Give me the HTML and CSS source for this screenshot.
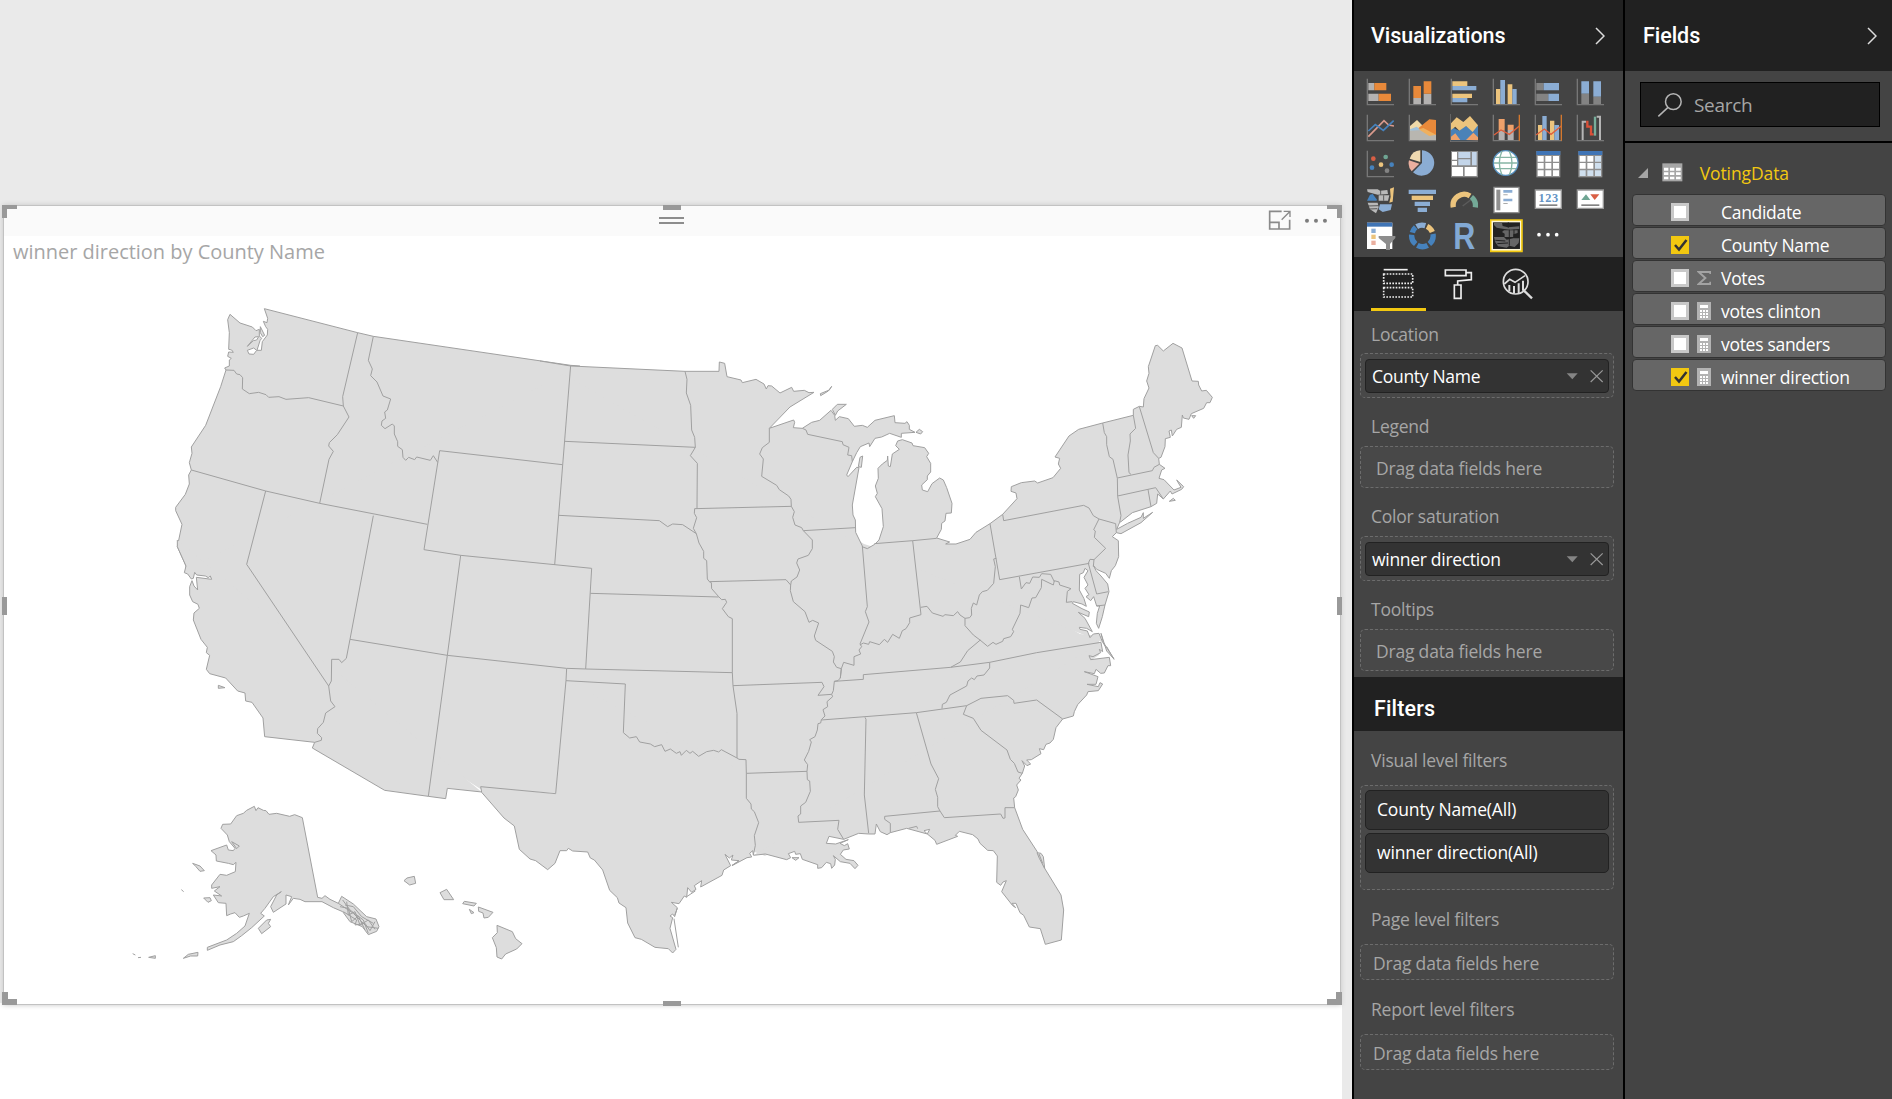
FILE: index.html
```
<!DOCTYPE html>
<html lang="en">
<head>
<meta charset="utf-8">
<title>Report</title>
<link rel="stylesheet" href="styles.css">
</head>
<body>
<div class="app">
  <main class="canvas">
    <section class="visual">
      <i class="h tl"></i><i class="h tc"></i><i class="h tr"></i><i class="h ml"></i><i class="h mr"></i><i class="h bl"></i><i class="h bc"></i><i class="h br"></i>
      <header class="visual-bar">
        <span class="grip"></span>
        <svg class="bar-icons" viewBox="140 55 190 72"><g fill="none" stroke="#8a8a8a" stroke-width="5"><path d="M187 65H151V118H211V90M151 98H179V118"/><path d="M187 90 211 66M193 65H212V82" stroke-width="4"/></g><g fill="#7d7d7d"><circle cx="263" cy="93" r="6"/><circle cx="290" cy="93" r="6"/><circle cx="317" cy="93" r="6"/></g></svg>
      </header>
      <h1 class="visual-title"><span>winner direction by County Name</span></h1>
      <svg class="map" viewBox="5 270 1334 730">
        <path class="land" d="M186 566 375 455 572 366 700 440 864 544 880 549 980 575 1080 634 1099 636 1099 655 940 760 765 856 752 851 744 776 650 745 566 690 556 793 482 790 320 685 177 545z"/>
        <!-- coasts and outer frontiers -->
        <g class="shape">
          <path transform="translate(120 290) scale(.33333)" d="M1380 228 1352 226 760 139 713 128 433 56 443 85 441 98 430 94 437 110 443 118 442 135 427 155 424 181 411 181 420 152 425 145 418 138 418 118 408 122 397 111 360 99 330 73 323 89 328 128 326 178 335 180 340 187 326 186 323 199 334 205 328 210 328 228 314 234 318 240 302 290 257 406 214 471 216 490 208 518 214 540 206 555 208 582 196 613 167 652 167 662 186 703 172 770 198 828 198 840"/>
          <path transform="translate(120 540) scale(.33333)" d="M172 0V20L198 78 193 98 203 102 214 117 220 115 224 97 230 105 256 108 265 113 271 108 275 118 229 112 233 150 222 138 216 122 209 140 209 165 218 185 234 193 238 205 222 219 220 240 243 298 262 322 259 338 269 346 259 388 269 401 317 414 353 453 375 459 377 483 396 487 429 534 434 590 584 607 577 624 794 751 925 769 977 776 982 745 1085 756"/>
          <path transform="translate(540 340) scale(.33333)" d="M0 63 92 78 435 94 537 94 538 66 554 70 561 110 603 120 607 128 648 118 672 132 679 147 684 137 695 138 720 159 755 142 761 154 793 151 807 158 822 157 750 201 688 265 761 240 764 247 760 263 787 265 815 247 839 241 873 211 884 226 886 241 898 230 925 236 943 259 967 256 982 262 1005 241 1063 227 1065 248 1095 250 1101 245 1108 256 1108 268 1125 277 1084 280 1084 292 1049 280 1025 291 1005 295 989 320 987 309 961 320 950 338 937 365 920 405 924 410 950 382 957 383 937 495 939 525 946 540 947 577 967 618"/>
          <path transform="translate(760 330) scale(.33333)" d="M306 650 322 656 344 643 357 630 370 590 366 536 346 500 352 490 346 468 355 445 354 415 367 402 382 391 383 378 385 408 391 410 397 372 418 358 407 347 413 333 427 329 456 339 459 347 494 353 506 370 500 380 512 400 512 426 502 438 502 449 485 465 487 480 503 485 516 461 539 444 550 450 560 473 576 520 574 549 558 550 555 573 545 580 544 598 530 624 569 636 557 642 588 642 630 628 648 607 690 581 728 553 771 506 768 489 753 484 754 470 784 458 824 453 833 459 879 443 902 415 895 402 899 385 885 381 927 318 956 298 1028 279 1120 256 1120 238 1138 229 1150 231 1152 206 1167 174 1160 153 1167 130 1165 110 1186 47 1193 46 1210 63 1239 40 1266 54 1296 153 1315 154 1316 165 1325 183 1339 181 1357 202 1350 218 1340 218 1331 235 1294 251 1287 268 1270 264 1267 255 1264 292 1250 298 1237 318 1234 300 1227 303 1231 322 1216 326 1215 350 1203 382 1196 385 1198 403 1215 415 1205 420 1197 445 1212 449 1242 480 1263 472 1250 450 1271 470 1265 478 1236 492 1231 483 1210 507 1193 492 1190 520 1173 530 1117 548 1083 575 1079 577 1070 598 1103 580 1143 562 1150 548 1150 565 1178 547 1143 578 1083 611 1069 608 1057 620 1075 632 1076 680 1066 707 1054 722 1048 745 1037 730 1010 718 1000 706 1008 722 1023 738 1043 762 1047 785 1035 825 1027 860 1016 895 1009 880 1012 850 1019 828 1010 828 1001 800 992 812 978 800 987 794 975 775 984 765 972 742 984 722 975 715 970 728 959 733 958 780 972 806 979 829 966 822 940 815 937 820 966 836 988 846 986 860 955 847 975 865 997 905 980 895 958 892 960 898 982 903 990 923 1000 912 1017 910 1028 937"/>
          <path transform="translate(720 560) scale(.33333)" d="M1143 247 1148 275 1138 268 1142 278 1119 290 1107 287 1112 299 1168 292 1172 317 1164 317 1153 339 1142 340 1128 328 1123 341 1093 335 1134 350 1128 373 1101 373 1135 380 1140 368 1148 372 1135 392 1104 395 1100 405 1073 434 1063 455 1060 468 1028 477 1008 503 1000 538 990 549 978 553 971 569 958 566 963 581 934 599 920 600 932 612 921 617 906 602 914 618 907 640 897 655 903 660 890 675 895 690 887 710 881 714 884 743 908 808 951 874 974 925 1023 1005 1031 1050 1024 1140 976 1153 961 1106 928 1101 911 1066 900 1058 888 1030 876 1030 887 1043 878 1037 845 995 859 962 849 966 842 976 830 967 832 888 820 872 803 871 780 850 774 837 758 824 718 814 706 826 713 829 650 853 645 841 622 822 560 805 511 818 501 824 481 815 469 792 465 822 446 822 416 820 371 838 327 829 319 850 347 852 385 839 360 850 373 857 383 851 388 867 370 870 361 883 378 898 402 902 414 916 405 926 390 910 361 905 340 887 346 898 344 915 335 925 332 911 319 907 305 923 293 925 293 914 247 898 241 881 227 883 224 874 205 881 212 893 200 899 136 882 100 886"/>
          <path transform="translate(540 640) scale(.33333)" d="M619 400V475L633 492 634 507 643 515 656 548 643 587 646 616 640 645 638 632 629 640 635 651 621 653 576 677 597 662 574 660 579 645 568 654 555 643 572 677 551 690 546 706 482 741 485 722 463 737 468 748 455 757 443 743 440 772 433 768 417 791 394 787 412 803 404 830 398 822 390 828 398 833 390 865 408 928 398 939 385 926 345 922 304 898 285 893 263 849 258 803 237 789 232 773 209 751 188 690 163 660 151 654 143 636 98 633 85 625 80 632 60 632 45 670 23 689 -13 662 -30 657 -62 628 -77 558 -108 534 -175 457 -178 440 47 461 78 122"/>
        </g>
        <!-- inlets -->
        <g class="shape water">
          <path transform="translate(120 290) scale(.33333)" d="M382 181 401 174 410 181 401 193 387 192zM382 169 405 141 416 140 410 150 400 152z"/>
          <path transform="translate(720 560) scale(.33333)" d="M612 812 629 808 622 822z"/>
        </g>
        <!-- islands and spits -->
        <g class="shape">
          <path transform="translate(120 290) scale(.33333)" d="M421 110 434 136 428 140 421 128z"/>
          <path transform="translate(540 340) scale(.33333)" d="M841 161 868 150 875 139 865 153 842 167zM877 208 892 193 919 193 893 213 886 226zM1128 277 1138 268 1148 275 1142 282zM955 380 960 352 968 348 964 382z"/>
          <path transform="translate(760 330) scale(.33333)" d="M1295 257H1307L1301 265zM1228 514 1240 505 1246 511zM1028 937 1062 988 1040 950"/>
          <path transform="translate(720 560) scale(.33333)" d="M951 878 963 880 970 890 974 925 958 895zM957 882 968 910M216 893H237L227 901zM566 805 590 799 593 806M36 916 56 904M1143 220 1150 247 1182 297 1160 273z"/>
          <path transform="translate(540 640) scale(.33333)" d="M402 836 415 922M440 770 466 753M404 826 412 805"/>
          <path transform="translate(120 540) scale(.33333)" d="M295 436 315 443 295 445zM403 799 408 812 414 803 430 811 438 812 447 823 470 820 509 829 524 824 547 833 593 1072 606 1075 615 1067 630 1078 655 1090 665 1069 700 1092 740 1130 768 1137 777 1160 770 1174 745 1184 727 1160 690 1145 668 1115 640 1103 606 1085 555 1085 540 1078 520 1075 505 1095 515 1070 498 1065V1092L460 1117 452 1100 470 1065 484 1055 460 1070 435 1105 422 1120 433 1128 395 1163 365 1187 340 1205 300 1215 262 1231 262 1222 320 1200 350 1180 375 1158 388 1120 370 1128 358 1132 345 1118 332 1122 320 1127 318 1090 295 1088 280 1065 305 1068 283 1053 300 1040 275 1045 275 1035 300 1003 320 1006 346 995 348 967 340 974 325 970 289 963 288 945 273 932 320 915 325 930 340 932 345 925 328 905 322 885 303 865 308 853 332 852 350 827 370 820 380 811z"/>
          <path transform="translate(120 540) scale(.33333)" d="M218 970 240 978 253 992 240 994 228 980zM184 1049 191 1055M251 1074 270 1073 274 1082 264 1087zM415 1165 440 1140 452 1138 445 1150 452 1160 425 1181zM335 905 358 918 350 926zM190 1255 205 1243 234 1237 233 1248 212 1248zM86 1252 106 1247V1255zM54 1253 63 1252M38 1241 46 1245"/>
          <path transform="translate(120 540) scale(.33333)" fill="none" d="M655 1090 700 1120 740 1160 775 1165M668 1080 690 1110 730 1140 745 1180M660 1100 685 1105 695 1145 715 1128 735 1170M675 1095 700 1100 725 1130 760 1150M670 1115 710 1140 705 1155 735 1150 750 1172 765 1145M680 1085 685 1125 705 1115 720 1155 745 1140 765 1168"/>
          <path transform="translate(120 540) scale(.33333)" d="M852 1022 861 1014 883 1009 887 1030 869 1035zM960 1058 980 1048 1001 1079H972zM1033 1084 1069 1090 1062 1098 1028 1091zM1075 1101 1119 1117 1105 1132 1092 1134 1089 1119 1076 1114zM1048 1108 1062 1118 1054 1121zM1131 1156 1177 1175 1187 1196 1206 1211 1190 1227 1157 1242 1145 1257 1131 1251 1129 1223 1117 1193 1132 1178z"/>
        </g>
        <!-- state lines -->
        <g class="shape lines">
          <path transform="translate(120 290) scale(.33333)" d="M318 240 342 241 350 252 360 254 368 263 367 297 388 311 416 307 438 314 446 322 477 320 498 328 566 323 670 348M713 128 668 320 670 348 687 381 652 434 628 458 626 468 640 484 627 508 599 640M214 540 437 603 599 640 922 703M760 139 745 211 757 237 752 257 771 276 789 318 812 327 802 360 794 366 797 385 786 393 784 406 795 416 817 402 823 408 823 432 833 455 833 469 847 479 849 502 857 511 866 502 884 509 890 501 931 511 940 497 953 517M1327 524 959 482 912 779 1022 796 1415 835M1352 226 1304 825M437 603 380 823M760 677 690 1048"/>
          <path transform="translate(120 540) scale(.33333)" d="M380 73 626 438 632 483 645 500 617 519 610 547 593 566 592 580 605 593 604 601 584 607M690 298 679 355 665 368 657 358 635 358 634 423 626 438M690 298 982 346 1339 385M1022 46 982 346 925 769"/>
          <path transform="translate(540 340) scale(.33333)" d="M787 265 798 270 803 283 907 305 909 314 927 322 923 345 935 347 937 365M688 265V307L667 323 659 342 670 357 665 409 710 436 718 449 746 468 753 478 754 499 763 515 758 532 765 555 785 563 790 572 817 600 817 626 805 646 774 657 770 669 779 690 771 711 754 723 752 735M464 506 754 499M508 725 738 719 752 735 751 752 760 785 795 815 807 847 818 841 836 849 823 888 827 901 877 934 883 950 880 966 890 982 904 986M790 572 946 563M967 618 982 800 976 815 987 846 960 912M1118 602 1143 824 1109 834 1109 848 1098 866 1087 872 1078 895 1058 883 1043 907 1033 898 1018 914 989 905 986 913 970 909 960 915M1003 611 1118 602 1190 595M960 912 965 920 957 930 962 942 942 950 942 976 911 967 904 986 901 1014M435 94 441 118 439 159 452 196 455 270 464 292 466 322 451 347 472 370 471 506M75 304 466 322M57 526 358 542 383 560 398 552 428 554 469 581M464 506 463 520 470 533 460 565 469 581 477 609 491 634 491 655 500 662 502 717 508 725 514 728 515 746 536 770 545 779 556 778 560 787 547 806 565 830 577 836 577 998M151 760 536 771M155 685 137 987M80 985 137 987 577 998"/>
          <path transform="translate(540 640) scale(.33333)" d="M80 85 78 122 256 132 250 278 269 294 289 290 299 306 331 312 344 320 365 314 375 334 391 327 409 340 420 335 424 346 439 331 450 340 458 334 476 349 500 335 521 331 536 336 544 329 591 354 597 358 618 359 619 400M577 98 579 137 591 220 591 354M579 137 846 127 852 140 834 166 875 163M619 400 801 394M904 86 901 114 894 122 883 124 880 152 875 163 878 170 861 185 863 200 849 209 855 228 844 239 842 249 834 251 832 270 825 290 809 299 814 306 806 334 793 360 803 374 801 394 802 419 809 423 811 454 797 487 782 498 782 522 774 528 776 547 897 541 893 568 911 598M975 232 978 238 973 465 986 580"/>
          <path transform="translate(720 560) scale(.33333)" d="M511 818V790L494 778V769L660 753 673 773 842 762 849 775 855 774 855 743 884 743M589 458 633 612 656 656 646 688 653 712 653 740 660 753M740 437 730 463 760 475 783 511 861 570 871 598 883 610 894 636 907 640M740 437 783 415 863 407 881 421 882 430 950 420 1028 477M809 307V324L792 345 771 348 763 359 755 354 744 363 740 378 690 405 679 427 667 433 666 446M304 480 435 470 589 458 740 437M343 364 430 358 430 344 692 322 809 307 950 278 1143 247M692 322 721 306 743 272 781 240"/>
          <path transform="translate(760 330) scale(.33333)" d="M482 832 501 829 517 849 549 859 555 854 580 857 593 845 600 855 615 865 615 887 640 915 660 930 683 949 699 937 708 943 728 934 731 926 752 920 761 905 757 898 780 850 782 825 806 833 816 804 827 803 844 773 845 748 880 765 883 752 897 756 899 765 933 776 922 784 919 817 937 815M615 865 629 863 635 855 634 835 640 819 650 825 658 795 667 785 682 781 701 760 706 710 701 687 709 685M690 581 719 749 988 700M778 740 784 777 798 758 809 760 818 741 838 742 845 731 872 733 883 755M985 700 1010 792 1045 785M985 700 990 688 1002 689 1000 710M1002 689 1037 655 1003 622 1006 603 1001 599 1017 567M728 553 731 572 971 526 987 534 1000 557 1017 567 1067 581 1069 608M1028 279 1033 308 1040 320 1040 344 1048 380 1059 388 1072 445 1073 499 1083 557 1079 577M1120 256 1127 295 1110 312 1111 333 1104 375 1107 428 1113 433M1072 444 1177 422 1182 412 1198 403M1073 498 1187 473 1210 507M1164 478 1173 530M1138 230 1180 368 1196 385M1010 828 1035 825"/>
        </g>
      </svg>
    </section>
  </main>

  <aside class="pane vis">
    <header class="pane-head"><h2><span>Visualizations</span></h2><svg class="chev" viewBox="0 0 10 18"><path d="M1 1 9 9 1 17"/></svg></header>
    <div class="gallery">
      <svg viewBox="50 234 84 84"><path class="ax" d="M54 236V314H134"/><path fill="#b4b2b1" d="M57 249H75V271H57zM57 281H88V303H57z"/><path fill="#e8893a" d="M75 249H111V271H75zM88 281H125V303H88z"/></svg>
      <svg viewBox="176 234 84 84"><path class="ax" d="M180 236V314H260"/><path fill="#b4b2b1" d="M192 294H215V312H192zM223 281H246V312H223z"/><path fill="#e8893a" d="M192 258H215V294H192zM223 244H246V281H223z"/></svg>
      <svg viewBox="302 234 84 84"><path class="ax" d="M306 236V314H386"/><path fill="#ecc47d" d="M309 244H354V258H309zM309 281H368V294H309z"/><path fill="#8badd4" d="M309 258H381V271H309zM309 294H354V307H309z"/></svg>
      <svg viewBox="428 234 84 84"><path class="ax" d="M432 236V314H512"/><path fill="#ecc47d" d="M440 267H453V312H440zM475 253H489V312H475z"/><path fill="#8badd4" d="M453 240H467V312H453zM489 267H502V312H489z"/></svg>
      <svg viewBox="554 234 84 84"><path class="ax" d="M558 236V314H638"/><path fill="#838383" d="M561 249H583V271H561zM561 281H597V303H561z"/><path fill="#8badd4" d="M583 249H629V271H583zM597 281H629V303H597z"/></svg>
      <svg viewBox="680 234 84 84"><path class="ax" d="M684 236V314H764"/><path fill="#8badd4" d="M696 244H719V281H696zM732 244H755V290H732z"/><path fill="#838383" d="M696 281H719V312H696zM732 290H755V312H732z"/></svg>

      <svg viewBox="50 342 84 84"><path class="ax" d="M54 344V422H134"/><path d="M57 410 104 362 118 375 134 378" fill="none" stroke="#d99a8c" stroke-width="5"/><path d="M57 393 78 374 102 391 133 362" fill="none" stroke="#4682bd" stroke-width="5"/></svg>
      <svg viewBox="176 342 84 84"><path class="ax" d="M180 344V422H260"/><path fill="#efd9a8" d="M182 378 203 360 218 375V420H182z"/><path fill="#e8893a" d="M203 388 240 358 260 360V408L230 400z"/><path fill="#9fc1dc" d="M182 388 202 380 222 395 182 392z"/><path fill="#b8b6b0" d="M182 392 220 390 260 405V420H182z"/><path fill="#efb05e" d="M208 388 222 384 260 404 240 408z"/></svg>
      <svg viewBox="302 342 84 84"><path fill="#4a82b8" d="M305 380 330 392 345 375 365 388 386 375V421H305z"/><path fill="#ecc47d" d="M305 370 322 352 342 366 362 348 386 376 370 396 350 378 330 392 318 380 305 390z"/><path fill="#efa26a" d="M305 410 318 400 333 420H305zM350 420 372 398 386 412V421z"/><path class="ax" d="M302 340V426H390" stroke="#8b8b8b"/></svg>
      <svg viewBox="428 342 84 84"><path class="ax" d="M432 344V422H512"/><path fill="#efa16a" d="M448 357H466V392H448zM475 374H493V390H475z"/><path fill="#b4b2b1" d="M448 392H466V420H448zM475 390H493V420H475z"/><path fill="none" stroke="#e0603c" stroke-width="4" d="M434 405 455 390 480 403 510 378"/><path fill="none" stroke="#d4782e" stroke-width="4" d="M510 344V422"/></svg>
      <svg viewBox="554 342 84 84"><path class="ax" d="M558 344V422H638"/><path fill="#ecc47d" d="M566 375H579V420H566zM602 362H615V420H602z"/><path fill="#8badd4" d="M579 348H592V420H579zM615 375H629V420H615z"/><path fill="none" stroke="#e0603c" stroke-width="4" d="M560 405 585 387 605 403 636 378"/><path fill="none" stroke="#d4782e" stroke-width="4" d="M636 344V422"/></svg>
      <svg viewBox="680 342 84 84"><path class="ax" d="M684 344V422H764"/><path fill="none" stroke="#b5b5b5" stroke-width="6" d="M700 420V365H710M742 350H752V420"/><path fill="none" stroke="#d95038" stroke-width="7" d="M714 362V380H725V403H733"/><path fill="none" stroke="#77ad9b" stroke-width="7" d="M737 407V350"/></svg>

      <svg viewBox="50 450 84 84"><path class="ax" d="M54 452V530H134"/><circle cx="72" cy="476" r="7" fill="#d95f45"/><circle cx="109" cy="471" r="7" fill="#6fa593"/><circle cx="95" cy="494" r="7" fill="#ecc47d"/><circle cx="127" cy="494" r="7" fill="#4682bd"/><circle cx="68" cy="503" r="7" fill="#4682bd"/><circle cx="113" cy="512" r="7" fill="#838383"/></svg>
      <svg viewBox="176 450 84 84"><path fill="#8badd4" d="M218 489V451A38 38 0 1 1 191 517z"/><path fill="#efd9b0" d="M213 486 181 476A36 36 0 0 1 213 451z"/><path fill="#eaaf9f" d="M210 491 187 514A36 36 0 0 1 179 481z"/></svg>
      <svg viewBox="302 450 84 84"><path fill="#8a8a8a" d="M305 453H386V532H305z"/><path fill="#fff" d="M308 456H323V479H308zM308 483H323V496H308zM308 501H341V528H308zM346 501H382V528H346z"/><path fill="#c3d5e9" d="M327 456H363V474H327zM368 456H382V496H368zM327 478H363V496H327z"/></svg>
      <svg viewBox="428 450 84 84"><circle cx="469" cy="489" r="37" fill="#fff" stroke="#5590c0" stroke-width="4"/><path fill="none" stroke="#86b5a5" stroke-width="4" d="M437 472H501M434 489H504M437 506H501M458 453Q442 489 458 525M480 453Q496 489 480 525"/></svg>
      <svg viewBox="554 450 84 84"><path fill="#8f8f8f" d="M561 453H633V532H561z"/><path fill="#3f74b5" d="M561 453H633V465H561z"/><path fill="#fff" d="M565 468H583V485H565zM588 468H606V485H588zM611 468H629V485H611zM565 489H583V506H565zM588 489H606V506H588zM611 489H629V506H611zM565 511H583V528H565zM588 511H606V528H588zM611 511H629V528H611z"/></svg>
      <svg viewBox="680 450 84 84"><path fill="#8f8f8f" d="M687 453H759V532H687z"/><path fill="#3f74b5" d="M687 453H759V465H687z"/><path fill="#fff" d="M691 468H709V485H691zM714 468H732V485H714zM691 489H709V506H691zM714 489H732V506H714z"/><path fill="#cfdfee" d="M737 468H755V485H737zM737 489H755V506H737zM691 511H709V528H691zM714 511H732V528H714zM737 511H755V528H737z"/></svg>

      <svg viewBox="50 558 84 84"><path fill="#b9b9b9" d="M53 568H85L92 572 114 570 116 582 85 584 55 576zM88 586H120L116 602H88zM55 608H85L88 622 80 640 62 628z"/><path fill="#4682bd" d="M62 584 70 582 82 598V602H53z"/><path fill="#ecc47d" d="M122 566 134 562 130 605 120 608 124 590z"/><path fill="#8badd4" d="M92 613H128L124 630 100 636 88 628z"/><path fill="none" stroke="#444" stroke-width="2.500" d="M53 618 88 617M60 627 84 626M94 570V584M103 586V602"/></svg>
      <svg viewBox="176 558 84 84"><path fill="#8badd4" d="M178 569H260V582H178zM196 605H242V618H196zM205 623H233V636H205z"/><path fill="#ecc47d" d="M187 587H251V600H187z"/></svg>
      <svg viewBox="302 558 84 84"><path fill="none" stroke="#ecc47d" stroke-width="16" d="M312 622A33 33 0 0 1 362 588"/><path fill="none" stroke="#74a997" stroke-width="16" d="M366 591A33 33 0 0 1 378 622"/><path stroke="#5c5c5c" stroke-width="4" d="M340 618 364 600"/></svg>
      <svg viewBox="428 558 84 84"><path fill="#fff" stroke="#8f8f8f" stroke-width="4" d="M434 562H509V638H434z"/><path fill="#8f8f8f" d="M441 569H453V631H441z"/><path fill="#8badd4" d="M462 570H489V578H462zM462 596H489V604H462z"/><path fill="#aaa" d="M462 583H475V586H462zM462 609H475V612H462z"/></svg>
      <svg viewBox="554 558 84 84"><path fill="#fff" stroke="#999" stroke-width="4" d="M558 570H636V625H558z"/><text x="598" y="605" text-anchor="middle" class="num" fill="#6393c4">123</text><path fill="#838383" d="M570 613H624V618H570z"/></svg>
      <svg viewBox="680 558 84 84"><path fill="#fff" stroke="#999" stroke-width="4" d="M684 570H762V625H684z"/><path fill="#6fa593" d="M696 600H723L710 583z"/><path fill="#d95f45" d="M723 583H750L736 600z"/><path fill="#838383" d="M696 613H750V618H696z"/></svg>

      <svg viewBox="50 666 90 84" class="wide"><path fill="#fff" d="M53 668H129V747H53z"/><path fill="#3f74b5" d="M53 668H129V680H53z"/><path fill="#8badd4" d="M66 686H79V699H66z"/><path fill="#ecc47d" d="M66 704H79V717H66z"/><path fill="#eaaf9f" d="M66 722H79V735H66z"/><path fill="#8d8d8d" d="M88 708H138V714L122 732V752H110V732L88 714z"/></svg>
      <svg viewBox="176 666 84 84"><g fill="none" stroke-width="16"><path stroke="#8badd4" d="M202 680A32 32 0 0 1 228 677"/><path stroke="#ecc47d" d="M233 679A32 32 0 0 1 249 696"/><path stroke="#4682bd" d="M251 702A32 32 0 0 1 240 732M235 736A32 32 0 0 1 204 736M199 732A32 32 0 0 1 187 704M189 698A32 32 0 0 1 199 682"/></g></svg>
      <svg class="r-icon" viewBox="302 648 84 126"><text x="312" y="748" class="r" fill="#82a9d4" textLength="66" lengthAdjust="spacingAndGlyphs">R</text></svg>
      <svg viewBox="420 658 100 100" class="picked"><path fill="#fff8d8" stroke="#f2c811" stroke-width="5" d="M422 661H516V755H422z"/><path fill="#222" d="M429 668H510V748H429z"/><path fill="#666" d="M432 669H456L458 679 474 683 508 680V688L480 690 462 688 440 684 432 676zM462 692H503V700L490 704V712H464V702L456 697zM432 712H462L470 720 490 716H508L506 730 494 742 478 738 470 744 444 740 436 728z"/><path stroke="#222" stroke-width="3" fill="none" d="M475 668V684M478 690V712M492 690V712M436 722 466 724M442 732 474 730M478 716V738"/></svg>
      <svg viewBox="554 666 84 84"><g fill="#fff"><circle cx="569" cy="704" r="5.5"/><circle cx="596" cy="704" r="5.5"/><circle cx="622" cy="704" r="5.5"/></g></svg>
    </div>
    <nav class="tabs">
      <svg class="on" viewBox="64 21 164 153"><path fill="none" stroke="#eee" stroke-width="5" d="M102 59H174"/><g fill="none" stroke="#eee" stroke-width="5" stroke-dasharray="5 4"><path d="M102 72H189V100H102zM102 113H189V141H102z"/></g></svg>
      <svg viewBox="245 21 164 153"><path fill="none" stroke="#eee" stroke-width="5" d="M288 60H350V77H288zM350 68H366V89L325 93V104M315 105H335V145H315z"/></svg>
      <svg viewBox="423 21 164 153"><g fill="none" stroke="#ddd" stroke-width="5"><circle cx="500" cy="95" r="37"/><path d="M524 121 549 145" stroke-width="7"/><path d="M466 102 482 88 498 97 528 77"/><path d="M481 105V124M495 108V130M509 100V130M522 92V122" stroke-width="6"/></g></svg>
    </nav>
    <div class="wells">
      <h3>Location</h3>
      <div class="well"><div class="chip"><span>County Name</span><svg viewBox="645 360 120 44"><path fill="#858585" d="M650 373H683L667 391z"/><path stroke="#999" stroke-width="3.5" d="M722 364 758 399M758 364 722 399"/></svg></div></div>
      <h3>Legend</h3>
      <div class="well hint">Drag data fields here</div>
      <h3>Color saturation</h3>
      <div class="well"><div class="chip"><span>winner direction</span><svg viewBox="645 360 120 44"><path fill="#858585" d="M650 373H683L667 391z"/><path stroke="#999" stroke-width="3.5" d="M722 364 758 399M758 364 722 399"/></svg></div></div>
      <h3>Tooltips</h3>
      <div class="well hint">Drag data fields here</div>
    </div>
    <header class="filters-head"><h2>Filters</h2></header>
    <div class="filters">
      <h3>Visual level filters</h3>
      <div class="well stack"><div class="card">County Name(All)</div><div class="card">winner direction(All)</div></div>
      <h3>Page level filters</h3>
      <div class="well hint">Drag data fields here</div>
      <h3>Report level filters</h3>
      <div class="well hint">Drag data fields here</div>
    </div>
  </aside>

  <aside class="pane fields">
    <header class="pane-head"><h2>Fields</h2><svg class="chev" viewBox="0 0 10 18"><path d="M1 1 9 9 1 17"/></svg></header>
    <div class="search-wrap"><div class="search"><svg viewBox="110 272 78 78"><g fill="none" stroke="#b5b5b5" stroke-width="4.5"><circle cx="159" cy="301" r="23.500"/><path d="M143 318 114 345"/></g></svg><span>Search</span></div></div>
    <div class="table-name"><svg class="tri" viewBox="0 0 10 10"><path fill="#a6a6a6" d="M10 0V10H0z"/></svg><svg class="tbl" viewBox="126 488 62 56"><path fill="#a6a6a6" d="M127 489H187V543H127z"/><path fill="#fff" d="M132 502H145V511H132zM150 502H163V511H150zM168 502H182V511H168zM132 516H145V524H132zM150 516H163V524H150zM168 516H182V524H168zM132 529H145V537H132zM150 529H163V537H150zM168 529H182V537H168z"/></svg><span>VotingData</span></div>
    <ul>
      <li><i class="cb"></i><b></b>Candidate</li>
      <li><i class="cb ck"><svg viewBox="0 0 18 18"><path d="M4 9 8 13.500 15.500 4"/></svg></i><b></b>County Name</li>
      <li><i class="cb"></i><b><svg viewBox="232 814 42 42"><path fill="none" stroke="#a3a3a3" stroke-width="6" d="M272 823V817H237L257 835 237 853H272V846"/></svg></b>Votes</li>
      <li><i class="cb"></i><b><svg class="calc" viewBox="0 0 14 18"><path fill="#b3b3b3" d="M0 0H14V18H0z"/><path fill="#fff" d="M3 3H11V6H3z"/><path stroke="#fff" stroke-width="2" stroke-dasharray="2 1" d="M3 9H11M3 12H11M3 15H11"/></svg></b>votes clinton</li>
      <li><i class="cb"></i><b><svg class="calc" viewBox="0 0 14 18"><path fill="#b3b3b3" d="M0 0H14V18H0z"/><path fill="#fff" d="M3 3H11V6H3z"/><path stroke="#fff" stroke-width="2" stroke-dasharray="2 1" d="M3 9H11M3 12H11M3 15H11"/></svg></b>votes sanders</li>
      <li><i class="cb ck"><svg viewBox="0 0 18 18"><path d="M4 9 8 13.500 15.500 4"/></svg></i><b><svg class="calc" viewBox="0 0 14 18"><path fill="#b3b3b3" d="M0 0H14V18H0z"/><path fill="#fff" d="M3 3H11V6H3z"/><path stroke="#fff" stroke-width="2" stroke-dasharray="2 1" d="M3 9H11M3 12H11M3 15H11"/></svg></b>winner direction</li>
    </ul>
  </aside>
</div>
</body>
</html>
```
FILE: styles.css
```
* { box-sizing: border-box; }
body { margin: 0; font: 17.5px/20px "Open Sans", "Noto Sans", sans-serif; letter-spacing: -.3px; overflow: hidden; }
h1, h2, h3, ul { margin: 0; padding: 0; font-weight: 400; }
svg { display: block; flex: none; }
.app { display: flex; width: 1892px; height: 1099px; }

.canvas { width: 1352px; height: 1099px; padding: 205px 0 0 3px; background: linear-gradient(#eaeaea 1003px, #fff 1003px) 0 0 / 1342px 100% no-repeat #eaeaea; }
.visual { position: relative; width: 1338px; height: 800px; background: #fff; border: 1px solid #c2c2c2; box-shadow: 0 0 5px #c4c4c4; }
.visual-bar { display: flex; height: 30px; background: #fafafa; padding: 0 10.500px 0 655px; }
.grip { width: 25px; height: 7px; margin-top: 11px; border: solid #8d8d8d; border-width: 2px 0; }
.bar-icons { width: 63.300px; height: 24px; margin: 2px 0 0 auto; }
.visual-title { height: 34px; padding: 3px 0 0 9px; font-size: 20px; line-height: 26px; letter-spacing: -.02px; color: #a6a6a6; }
.map { width: 1334px; height: 730px; margin-left: 1px; }
.land { fill: #ddd; }
.shape { fill: #ddd; stroke: #a0a0a0; }
.shape path { stroke-width: 3; stroke-linejoin: round; }
.water { fill: #fff; }
.lines { fill: none; }
.h { position: absolute; border: 0 solid #999; width: 15px; height: 13px; }
.tl { left: -2px; top: -1px; border-width: 4px 0 0 5px; }
.tr { right: -2px; top: -1px; border-width: 4px 5px 0 0; }
.bl { left: -2px; bottom: -1px; border-width: 0 0 6px 6px; }
.br { right: -2px; bottom: -1px; border-width: 0 6px 6px 0; }
.tc, .bc { left: 659px; width: 18px; height: 5px; background: #999; }
.tc { top: -1px; }
.bc { bottom: -2px; }
.ml, .mr { top: 391px; width: 5px; height: 18px; background: #999; }
.ml { left: -2px; }
.mr { right: -2px; }

.pane { background: #444; color: #fff; }
.vis { width: 272px; border: solid #000; border-width: 0 1px 0 2px; }
.fields { width: 268px; border-left: 1px solid #000; }
.pane-head, .filters-head { display: flex; align-items: center; background: #212121; }
.pane-head { height: 71px; justify-content: space-between; padding: 0 18px 0 17px; }
.fields .pane-head { padding: 0 15px 0 18px; }
h2 { font: 500 21.500px/26px Roboto, sans-serif; letter-spacing: -.05px; }
.chev { width: 10px; height: 18px; }
.chev path { fill: none; stroke: #ddd; stroke-width: 1.500; }
.gallery { display: grid; grid-template-columns: repeat(6, 42px); grid-auto-rows: 36px; height: 186px; padding: 7px 0 0 12.300px; }
.gallery svg { width: 28px; height: 28px; }
.gallery svg.wide { width: 30px; }
.gallery svg.r-icon { height: 42px; margin-top: -6px; }
.gallery svg.picked { width: 33.300px; height: 33.300px; margin: -2.700px 0 0 -2.700px; }
.ax { fill: none; stroke: #777; stroke-width: 4; }
.num { font: 700 37px "Liberation Serif", serif; letter-spacing: 2px; }
.r { font: 700 111px "Liberation Sans", sans-serif; letter-spacing: 0; }
.tabs { display: flex; gap: 5px; height: 54px; padding-left: 17px; background: #212121; }
.tabs svg { box-sizing: content-box; width: 54.700px; height: 51px; border-bottom: 3px solid transparent; }
.tabs svg.on { border-color: #f2c811; }

h3 { height: 48.600px; padding: 18.500px 0 0 17px; font-size: 17.500px; line-height: 20px; letter-spacing: -.23px; color: #a6a6a6; }
.wells { height: 366px; }
.wells h3:first-child { height: 42px; padding-top: 12.500px; }
.well { margin-left: 6px; width: 254px; height: 44.500px; padding: 5px 4px; background: #484848; border: 1px dashed #6c6c6c; border-radius: 5px; }
.hint { height: 41.500px; padding: 0 15px; line-height: 43px; letter-spacing: -.2px; color: #a6a6a6; }
.chip { display: flex; align-items: center; justify-content: space-between; height: 34px; padding: 0 3px 0 6px; background: #333; border: 1px solid #222; border-radius: 4px; }
.chip svg { width: 40px; height: 14.700px; }
.filters-head { height: 54px; padding: 9px 0 0 20px; }
.filters-head h2 { letter-spacing: .15px; }
.filters h3 { height: 54px; padding-top: 19px; }
.filters .well { height: 36px; }
.filters .hint { padding-left: 12px; line-height: 37px; }
.filters .stack { height: 105px; padding-top: 3.500px; }
.card { height: 40px; margin-bottom: 3px; padding: 8px 11px; letter-spacing: -.15px; background: #333; border: 1px solid #222; border-radius: 5px; }

.search-wrap { height: 72px; padding: 11px 12px 0 15px; border-bottom: 2px solid #000; }
.search { display: flex; align-items: center; gap: 11px; height: 45px; padding-left: 16px; background: #212121; border: 1px solid #000; color: #a6a6a6; font-size: 19px; }
.search svg { width: 26px; height: 26px; }
.table-name { display: flex; align-items: center; height: 51px; padding: 8px 0 0 13px; letter-spacing: -.1px; color: #f2c811; }
.tri { width: 10px; height: 10px; margin-right: 14px; }
.tbl { width: 20.700px; height: 18.700px; margin-right: 17px; }
ul { list-style: none; padding-left: 7px; }
li { display: flex; align-items: center; width: 254px; height: 32px; margin-bottom: 1px; padding: 3px 0 0 38px; background: #666; border: 1px solid #333; border-radius: 4px; }
.cb { width: 18px; height: 18px; border: 3px solid #c8c8c8; background: #fff; }
.ck { border: 0; background: #f2c811; }
.ck path { fill: none; stroke: #333; stroke-width: 2.500; }
b { width: 32px; padding-left: 8px; }
b svg { width: 14px; height: 14px; }
b .calc { height: 18px; }
```
